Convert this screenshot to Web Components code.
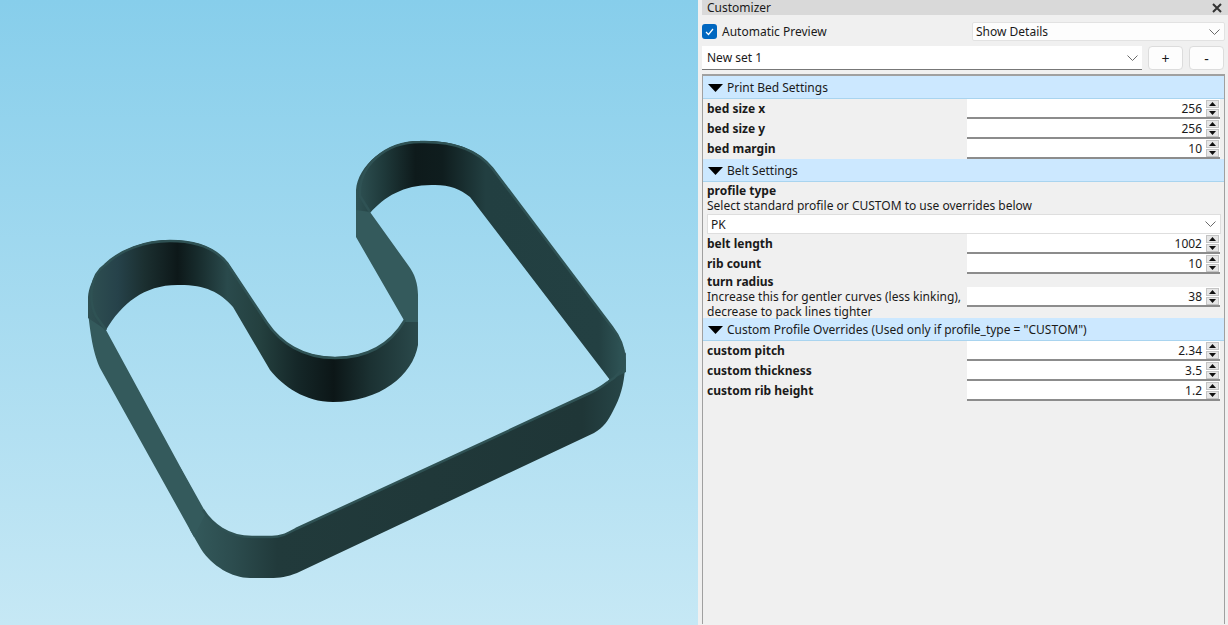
<!DOCTYPE html>
<html><head><meta charset="utf-8"><style>
html,body{margin:0;padding:0;width:1228px;height:625px;overflow:hidden}
body{display:flex;font:12px "Noto Sans",sans-serif;color:#1a1a1a;background:#f0f0f0}
</style></head><body>
<belt-view></belt-view>
<cz-panel>
  <cz-title>Customizer</cz-title>
  <cz-toolbar></cz-toolbar>
  <cz-setbar>New set 1</cz-setbar>
  <cz-frame>
    <cz-header>Print Bed Settings</cz-header>
    <cz-number value="256">bed size x</cz-number>
    <cz-number value="256">bed size y</cz-number>
    <cz-number value="10">bed margin</cz-number>
    <cz-header h="23">Belt Settings</cz-header>
    <cz-choice desc="Select standard profile or CUSTOM to use overrides below" value="PK">profile type</cz-choice>
    <cz-number value="1002">belt length</cz-number>
    <cz-number value="10">rib count</cz-number>
    <cz-number value="38" tall><span slot="desc">Increase this for gentler curves (less kinking),<br>decrease to pack lines tighter</span>turn radius</cz-number>
    <cz-header>Custom Profile Overrides (Used only if profile_type = "CUSTOM")</cz-header>
    <cz-number value="2.34">custom pitch</cz-number>
    <cz-number value="3.5">custom thickness</cz-number>
    <cz-number value="1.2">custom rib height</cz-number>
  </cz-frame>
</cz-panel>
<script>
const CHEV='<svg width="11" height="6" viewBox="0 0 11 6" fill="none" stroke="#6a6a6a" stroke-width="1"><path d="M.5.5l5 5 5-5"/></svg>';
function def(name,css,html,init){
  customElements.define(name,class extends HTMLElement{
    constructor(){super();const r=this.attachShadow({mode:'open'});r.innerHTML='<style>'+css+'</style>'+html;}
    connectedCallback(){if(init)init(this,this.shadowRoot);}
  });
}
def('belt-view',`:host{display:block;width:698px;height:625px;flex:none;background:linear-gradient(#87ceeb,#c6e8f5)}svg{display:block}`,
`<svg width="698" height="625" viewBox="0 0 698 625">
<defs>
<linearGradient id="a" gradientUnits="userSpaceOnUse" x1="88" y1="0" x2="420" y2="0">
<stop offset="0" stop-color="#2f5052"/><stop offset=".09" stop-color="#26424a" stop-opacity="1"/><stop offset=".17" stop-color="#1b2f30"/><stop offset=".27" stop-color="#0d1819"/><stop offset=".33" stop-color="#172b2c"/><stop offset=".42" stop-color="#2a4a4c"/><stop offset=".52" stop-color="#24403f"/><stop offset=".63" stop-color="#152728"/><stop offset=".74" stop-color="#0c1617"/><stop offset=".85" stop-color="#1b3132"/><stop offset="1" stop-color="#2b4a4c"/>
</linearGradient>
<linearGradient id="c" gradientUnits="userSpaceOnUse" x1="356" y1="0" x2="626" y2="0">
<stop offset="0" stop-color="#2f5254"/><stop offset=".1" stop-color="#1f3a3b"/><stop offset=".22" stop-color="#0e1a1b"/><stop offset=".32" stop-color="#0f1d1e"/><stop offset=".48" stop-color="#223f41"/><stop offset=".9" stop-color="#234042"/><stop offset="1" stop-color="#305658"/>
</linearGradient>
<linearGradient id="d" gradientUnits="userSpaceOnUse" x1="190" y1="0" x2="626" y2="0">
<stop offset="0" stop-color="#345a5c"/><stop offset=".1" stop-color="#2c4c4e"/><stop offset=".2" stop-color="#213a3b"/><stop offset=".9" stop-color="#1f3637"/><stop offset="1" stop-color="#274648"/>
</linearGradient>
</defs>
<!-- near bottom wall -->
<path fill="url(#d)" d="M180 467 L203 510 C212 524 228 537 252 537 L272 537 C282 537 288 533 296 529 L594 391 C603 386 608 382 612 376 L626 352 L625 368 C624 385 620 398 613 411 C608 421 604 427 594 433 L297 573 C287 577 280 578 270 578 L250 578 C232 578 212 566 201 549 L190 530 Z"/>
<!-- left diagonal -->
<path fill="#345a5c" d="M88 312 L106 330 L182 470 L206 513 L194 537 L100 368 C94 354 91 340 88 312 Z"/>
<!-- right lobe and far wall -->
<path fill="url(#c)" d="M356 236 L356 190 C358 166 385 141 420 141 C455 140 478 150 492 167 L612 327 C620 338 625 348 626 360 L626 372 L610 380 L470 197 C460 189 450 185 435 185 C405 184 385 196 370 213 Z"/>
<!-- left lobe and U -->
<path fill="url(#a)" d="M88 318 L88 297 C91 264 130 240 170 240 C195 240 215 247 228 263 L267 323 C280 342 302 357 335 357 C370 357 392 342 405 320 L418 293 L418 345 C413 375 380 402 333 402 C305 402 283 386 270 370 L233 307 C220 292 205 285 180 285 C145 284 122 303 106 330 Z"/>
<!-- right-of-U diagonal -->
<path fill="#345a5c" d="M356 237 L356 210 L370 212 L408 265 C415 274 418 284 418 296 L418 322 L405 322 Z"/>
<!-- rims -->
<g fill="none" stroke="#2f5254" stroke-width="2.5" stroke-linejoin="round">
<path d="M106 330 L96 316 C88 300 90 275 105 265 C120 250 145 241 170 241 C195 241 215 248 227 263 L267 323 C280 342 302 358 335 358 C370 358 392 342 405 320"/>
<path d="M370 212 L360 196 C358 166 385 142 420 142 C455 141 478 151 492 168 L612 327 C622 340 625 352 624 362 C622 372 615 378 608 382"/>
<path d="M608 382 C600 388 597 390 590 393 L296 529 C288 533 282 537 272 537 L252 537 C228 537 212 524 203 510"/>
</g>
</svg>`);
def('cz-panel',`:host{display:block;flex:1;min-width:0;height:625px;padding-left:4px;box-sizing:border-box;background:#f0f0f0}`,`<slot></slot>`);
def('cz-title',`:host{display:flex;align-items:center;justify-content:space-between;height:15px;background:#d9d9d9;padding:0 6px 0 5px;line-height:14px}svg{display:block}`,
`<slot></slot><svg width="10" height="10" viewBox="0 0 10 10" stroke="#333" stroke-width="2" fill="none"><path d="M1 1l8 8M9 1l-8 8"/></svg>`);
def('cz-toolbar',`:host{display:flex;align-items:center;height:19px;margin:7px 3px 0 0}
.cb{width:15px;height:15px;border-radius:3px;background:#0067c0;display:flex;align-items:center;justify-content:center;flex:none}
.l{width:250px;margin-left:5px;flex:none;white-space:nowrap}
.s{flex:1;height:19px;background:#fdfdfd;border:1px solid #e2e2e2;border-radius:2px;box-sizing:border-box;display:flex;align-items:center;justify-content:space-between;padding:0 4px 0 3px}`,
`<div class="cb"><svg width="9" height="8" viewBox="0 0 9 8" fill="none" stroke="#fff" stroke-width="1.2"><path d="M1 4l2.5 2.5L8 1"/></svg></div><div class="l">Automatic Preview</div><div class="s"><span>Show Details</span>${CHEV}</div>`);
def('cz-setbar',`:host{display:flex;height:24px;margin:5px 4px 0 0;gap:6px}
.c{flex:1;background:#fff;border-bottom:1px solid #777;box-sizing:border-box;display:flex;align-items:center;justify-content:space-between;padding:0 4px 0 5px}
.b{width:35px;flex:none;background:#fdfdfd;border:1px solid #dcdcdc;border-radius:4px;box-sizing:border-box;display:flex;align-items:center;justify-content:center;font-size:14px}`,
`<div class="c"><span><slot></slot></span>${CHEV}</div><div class="b">+</div><div class="b">-</div>`);
def('cz-frame',`:host{display:block;margin:4px 3px 0 0;height:550px;border:solid #a0a0a0;border-width:2px 0 0 1px;border-right:1px solid #a0a0a0;box-sizing:border-box}`,`<slot></slot>`);
def('cz-header',`:host{display:flex;align-items:center;height:23px;box-sizing:border-box;background:#cce8ff;border-bottom:1px solid #a9d4ef;padding:1px 0 0 5px}
svg{display:block;margin-right:4px;flex:none}`,
`<svg width="15" height="8" viewBox="0 0 15 8"><path d="M0 0h15L7.5 8z" fill="#000"/></svg><slot></slot>`);
const SPIN=`<div class="sp"><i><svg width="7" height="4" viewBox="0 0 7 4"><path d="M0 4h7L3.5 0z" fill="#111"/></svg></i><i><svg width="7" height="4" viewBox="0 0 7 4"><path d="M0 0h7L3.5 4z" fill="#111"/></svg></i></div>`;
def('cz-number',`:host{display:grid;grid-template-columns:260px 253px;padding-left:4px;height:20px;align-items:center}
:host([tall]){height:44px;align-items:start}
.t{font-weight:700;line-height:14px}
:host([tall]) .t{padding-top:1px}
.d{font-weight:400;display:block;line-height:15px;white-space:nowrap}
.v{height:20px;background:#fff;border-bottom:2px solid #8c8c8c;box-sizing:border-box;display:flex;align-items:center;justify-content:flex-end;padding-right:1px;gap:4px}
:host([tall]) .v{margin-top:13px}
.sp{width:13px;height:17px;display:flex;flex-direction:column;gap:1px}
.sp i{flex:1;background:#e6e6e6;border:1px solid #c4c4c4;box-sizing:border-box;display:flex;align-items:center;justify-content:center}`,
`<div class="t"><slot></slot><div class="d"><slot name="desc"></slot></div></div><div class="v"><span class="n"></span>${SPIN}</div>`,
(e,r)=>{r.querySelector('.n').textContent=e.getAttribute('value');});
def('cz-choice',`:host{display:block;padding:2px 3px 0 4px}
.t{font-weight:700;line-height:14px}.d{line-height:15px;white-space:nowrap}
.s{height:20px;background:#fff;border:1px solid #dedede;box-sizing:border-box;display:flex;align-items:center;justify-content:space-between;padding:0 4px 0 3px;margin-top:1px}`,
`<div class="t"><slot></slot></div><div class="d"></div><div class="s"><span class="n"></span>${CHEV}</div>`,
(e,r)=>{r.querySelector('.d').textContent=e.getAttribute('desc');r.querySelector('.n').textContent=e.getAttribute('value');});
</script>
</body></html>
